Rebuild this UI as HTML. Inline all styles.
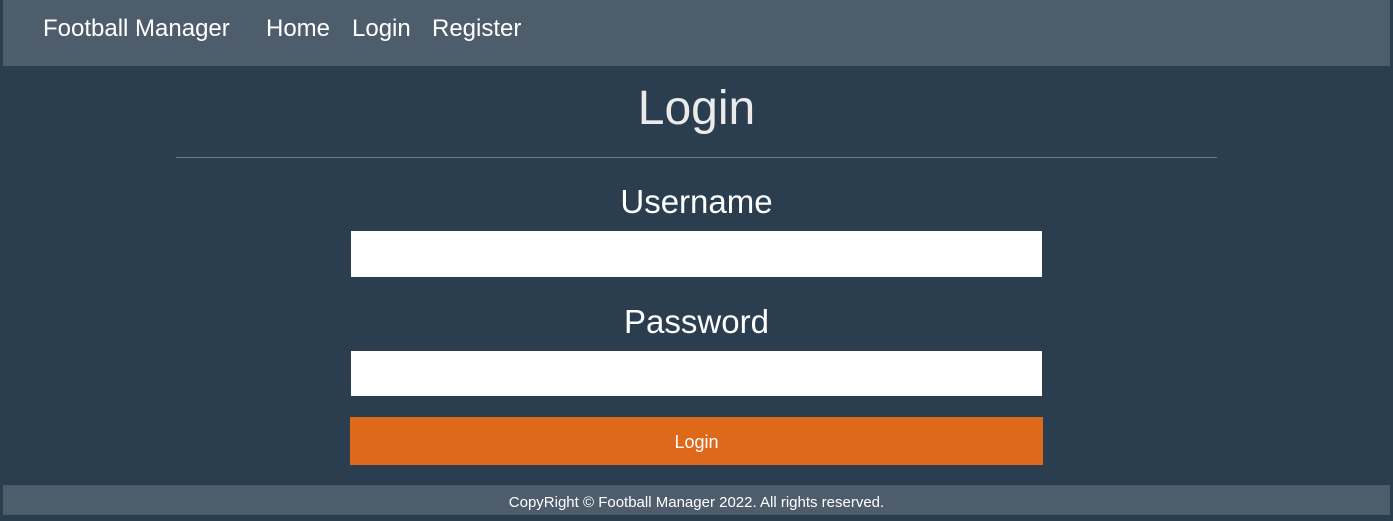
<!DOCTYPE html><html><head><style>
body{margin:0;width:1393px;height:520px;background:#2b3e50;font-family:"Liberation Sans",sans-serif;position:relative;overflow:hidden;color:#fff}
.nav{position:absolute;left:3px;top:0;width:1387px;height:66px;background:#4e5d6c}
.nav span{position:absolute;top:15px;font-size:24px;color:#fff}
h1{position:absolute;top:81px;left:0;width:1393px;text-align:center;margin:0;font-weight:normal;font-size:48px;color:#ebebeb}
.hr{position:absolute;left:176px;top:157px;width:1041px;height:1px;background:#6b7b8c}
.lbl{position:absolute;left:0;width:1393px;text-align:center;font-size:33px}
.in{position:absolute;left:351px;width:691px;background:#fff}
.btn{position:absolute;left:350px;top:417px;width:693px;height:48px;background:#df691a;text-align:center;line-height:50px;font-size:18px}
.foot{position:absolute;left:3px;top:485px;width:1387px;height:30px;background:#4e5d6c;text-align:center;font-size:15px;line-height:36px}
</style></head><body>
<div class="nav"><span style="left:40px">Football Manager</span><span style="left:263px">Home</span><span style="left:349px">Login</span><span style="left:429px">Register</span></div>
<h1>Login</h1><div class="hr"></div>
<div class="lbl" style="top:183px">Username</div>
<div class="in" style="top:231px;height:46px"></div>
<div class="lbl" style="top:303px">Password</div>
<div class="in" style="top:351px;height:45px"></div>
<div class="btn">Login</div>
<div class="foot">CopyRight © Football Manager 2022. All rights reserved.</div>
</body></html>
